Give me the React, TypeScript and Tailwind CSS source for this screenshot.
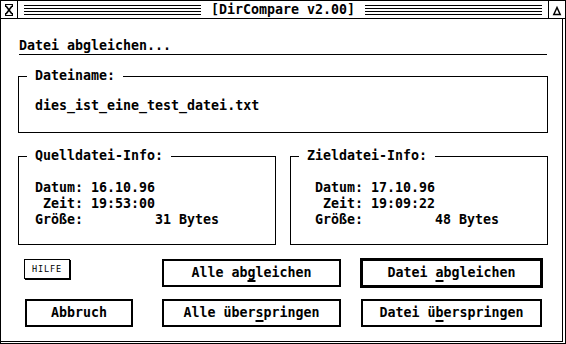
import React from "react";

const mono = "font-['DejaVu_Sans_Mono',monospace] font-bold text-[13.3px] leading-[16px]";

function Lines() {
  return (
    <div className="flex-1 flex flex-col gap-[2px] pt-[4px] self-start">
      <div className="h-px bg-black" />
      <div className="h-px bg-black" />
      <div className="h-px bg-black" />
      <div className="h-px bg-black" />
    </div>
  );
}

function Group({ label, children, inner }: { label: string; children: React.ReactNode; inner: string }) {
  return (
    <fieldset className="border border-black w-full">
      <legend className="ml-[8px] px-[8px] leading-[16px]">{label}</legend>
      <div className={inner}>{children}</div>
    </fieldset>
  );
}

function Btn({ children, w, def }: { children: React.ReactNode; w: string; def?: boolean }) {
  return (
    <div
      className={
        "flex items-center justify-center border-black bg-white " +
        w +
        (def ? " h-[30px] border-[3px]" : " h-[28px] border-2")
      }
    >
      <span className="whitespace-pre">{children}</span>
    </div>
  );
}

function U({ c }: { c: string }) {
  return <span className="underline decoration-2 underline-offset-[3px]">{c}</span>;
}

export default function App() {
  return (
    <div className={"w-[566px] h-[344px] bg-white text-black overflow-hidden " + mono}>
      <div className="w-[566px] h-[344px] border border-black flex flex-col">
        {/* title bar */}
        <div className="h-[18px] border-b border-black flex">
          <div className="w-[17px] border-r border-black">
            <svg width="16" height="17" viewBox="0 0 16 17" shapeRendering="crispEdges">
              <path d="M4 3.5H12M4 14.5H12" stroke="black" strokeWidth="1" />
              <path d="M4.5 3V6M11.5 3V6M4.5 12V15M11.5 12V15" stroke="black" strokeWidth="1" />
              <path d="M5 5L11 13M11 5L5 13" stroke="black" strokeWidth="1.6" shapeRendering="auto" />
            </svg>
          </div>
          <div className="flex-1 flex items-center px-[6px]">
            <Lines />
            <span className="px-[10px] whitespace-pre leading-[16px]">[DirCompare v2.00]</span>
            <Lines />
          </div>
          <div className="w-[17px] border-l border-black">
            <svg width="16" height="17" viewBox="0 0 16 17">
              <path d="M8 6.5L4.8 13.5H11.2Z" fill="none" stroke="black" strokeWidth="1.5" strokeLinejoin="miter" />
            </svg>
          </div>
        </div>

        {/* content */}
        <div className="w-[562px] h-[323px] border-r border-b border-black pl-[17px] pt-[19px]">
          <div className="w-[530px] flex flex-col">
            <div className="mx-[1px] h-[17px] border-b border-black">Datei abgleichen...</div>

            <div className="mt-[13px]">
              <Group label="Dateiname:" inner="pl-[16px] pt-[14px] pb-[18px]">
                <div>dies_ist_eine_test_datei.txt</div>
              </Group>
            </div>

            <div className="mt-[15px] flex gap-[14px]">
              <div className="w-[258px]">
                <Group label="Quelldatei-Info:" inner="pl-[16px] pt-[16px] pb-[16px] whitespace-pre">
                  <div>Datum: 16.10.96</div>
                  <div> Zeit: 19:53:00</div>
                  <div>Größe:         31 Bytes</div>
                </Group>
              </div>
              <div className="w-[258px]">
                <Group label="Zieldatei-Info:" inner="pl-[24px] pt-[16px] pb-[16px] whitespace-pre">
                  <div>Datum: 17.10.96</div>
                  <div> Zeit: 19:09:22</div>
                  <div>Größe:         48 Bytes</div>
                </Group>
              </div>
            </div>

            {/* buttons row 1 */}
            <div className="mt-[13px] h-[30px] flex items-center">
              <div className="self-start mt-[1px] ml-[6px] w-[46px] h-[20px] border border-black shadow-[1px_1px_0_#000] flex items-center justify-center font-normal text-[8.5px] tracking-[0.9px] leading-none">
                HILFE
              </div>
              <div className="ml-[92px]">
                <Btn w="w-[179px]">
                  Alle ab<U c="g" />leichen
                </Btn>
              </div>
              <div className="ml-[19px]">
                <Btn w="w-[183px]" def>
                  Datei <U c="a" />bgleichen
                </Btn>
              </div>
            </div>

            {/* buttons row 2 */}
            <div className="mt-[11px] h-[28px] flex items-center">
              <div className="ml-[7px]">
                <Btn w="w-[108px]">Abbruch</Btn>
              </div>
              <div className="ml-[29px]">
                <Btn w="w-[179px]">
                  Alle über<U c="s" />pringen
                </Btn>
              </div>
              <div className="ml-[20px]">
                <Btn w="w-[181px]">
                  Datei ü<U c="b" />erspringen
                </Btn>
              </div>
            </div>
          </div>
        </div>
      </div>
    </div>
  );
}
